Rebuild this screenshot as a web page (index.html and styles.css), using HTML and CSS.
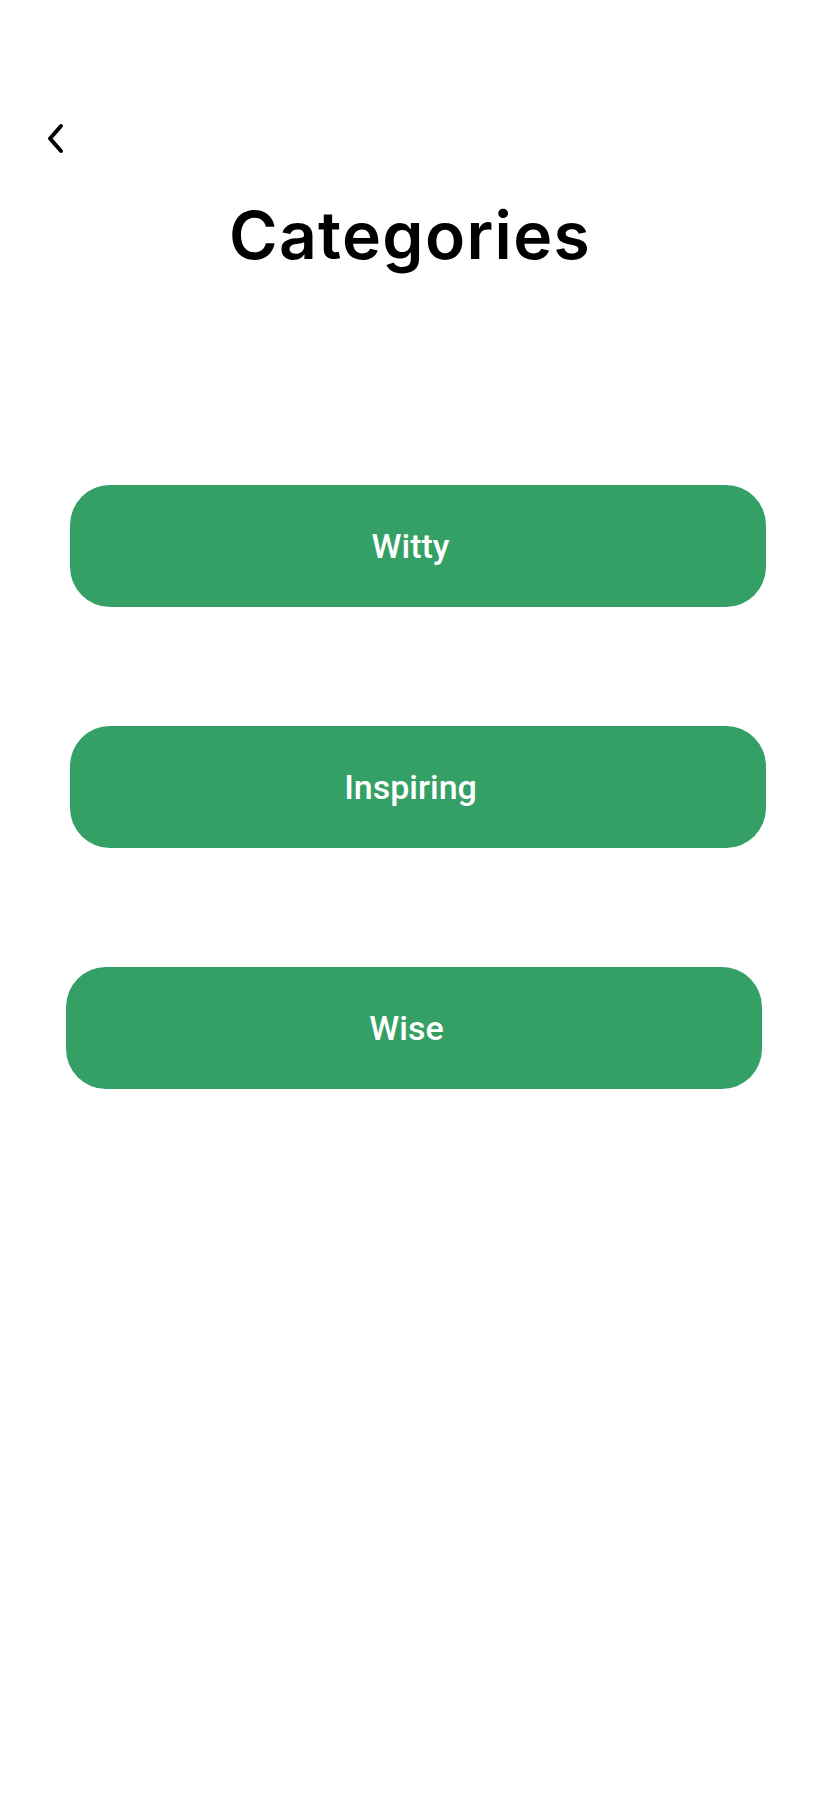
FILE: index.html
```html
<!DOCTYPE html>
<html lang="en">
<head>
<meta charset="utf-8">
<title>Categories</title>
<link rel="stylesheet" href="styles.css">
</head>
<body>
<div class="screen">
  <header class="topbar">
    <button class="back" aria-label="Back">
      <svg width="24" height="34" viewBox="0 0 24 34"><path d="M17 5 L6 17.5 L17 30" fill="none" stroke="#000" stroke-width="4" stroke-linecap="round" stroke-linejoin="round"/></svg>
    </button>
  </header>
  <h1 class="title">Categories</h1>
  <nav class="list">
    <a class="cat">Witty</a>
    <a class="cat">Inspiring</a>
    <a class="cat cat-shift">Wise</a>
  </nav>
</div>
</body>
</html>
```
FILE: styles.css
```css
html, body {
  margin: 0;
  padding: 0;
  background: #fff;
}
.screen {
  width: 820px;
  min-height: 1818px;
  display: flex;
  flex-direction: column;
}
.topbar {
  height: 195px;
  display: flex;
  align-items: flex-start;
  padding: 121px 0 0 44px;
  box-sizing: border-box;
}
.back {
  border: 0;
  background: none;
  padding: 0;
  width: 24px;
  height: 34px;
  cursor: pointer;
}
.back svg { display: block; }
.title {
  margin: 0;
  font-family: "Inter", "Lato", sans-serif;
  font-weight: 600;
  font-size: 66px;
  line-height: 80px;
  text-align: center;
  color: #000;
  letter-spacing: 1.3px;
}
.list {
  margin-top: 210px;
  display: flex;
  flex-direction: column;
  align-items: flex-start;
  gap: 119px;
  padding-left: 70px;
}
.cat {
  width: 696px;
  height: 122px;
  box-sizing: border-box;
  padding-right: 15px;
  border-radius: 40px;
  background: #34a065;
  color: #fff;
  display: flex;
  align-items: center;
  justify-content: center;
  font-family: "Roboto", "Liberation Sans", sans-serif;
  font-weight: 500;
  font-size: 34px;
  text-decoration: none;
}
.cat-shift {
  margin-left: -4px;
}
```
